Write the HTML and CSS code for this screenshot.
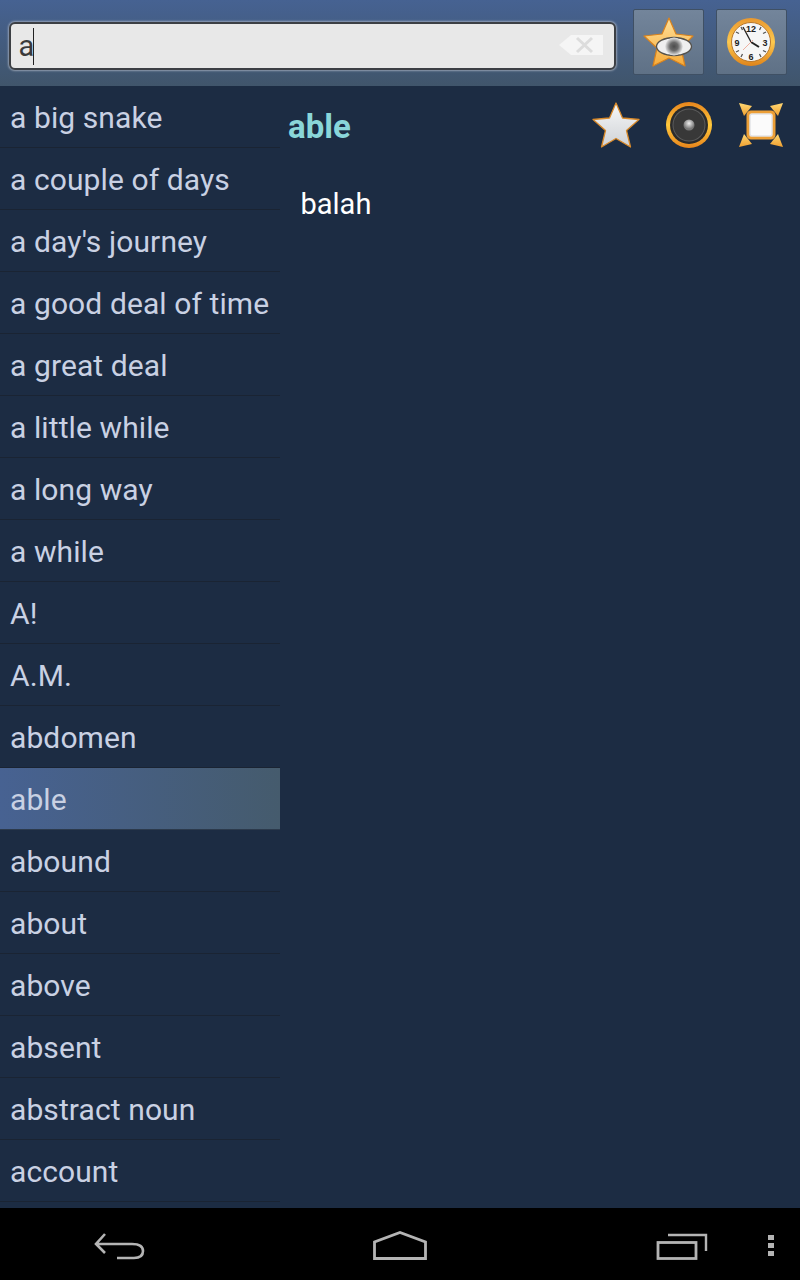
FILE: index.html
```html
<!DOCTYPE html>
<html lang="en">
<head>
<meta charset="utf-8">
<title>Dictionary</title>
<link rel="stylesheet" href="styles.css">
</head>
<body>
<div class="app">
  <header class="topbar">
    <div class="search">
      <span class="search-text">a</span><span class="caret"></span>
      <svg class="clear" width="44" height="20" viewBox="0 0 44 20">
        <path d="M0 10 L12 0 H44 V20 H12 Z" fill="#f5f5f5"/>
        <path d="M18 3 L33 17 M33 3 L18 17" stroke="#dcdcdc" stroke-width="3" fill="none"/>
      </svg>
    </div>
    <button class="tool">
      <svg width="69" height="64" viewBox="0 0 69 64">
        <defs>
          <linearGradient id="starGold" x1="0" y1="0" x2="0" y2="1">
            <stop offset="0" stop-color="#ffe09a"/>
            <stop offset="1" stop-color="#f6ab3a"/>
          </linearGradient>
          <radialGradient id="pupil">
            <stop offset="0" stop-color="#4c4c4c"/>
            <stop offset="0.45" stop-color="#6a6a6a"/>
            <stop offset="1" stop-color="#e8e8e8"/>
          </radialGradient>
        </defs>
        <path d="M35 8 L42 24 L59 26 L47 38 L51 56 L35 48 L19 56 L23 38 L10 26 L28 24 Z" fill="url(#starGold)" stroke="#d9821c" stroke-width="1.2" stroke-linejoin="round"/>
        <ellipse cx="40" cy="36.500" rx="17.500" ry="9" fill="#efefef" stroke="#55524c" stroke-width="1.3"/>
        <circle cx="40" cy="36.500" r="9" fill="url(#pupil)"/>
      </svg>
    </button>
    <button class="tool">
      <svg width="69" height="64" viewBox="0 0 69 64">
        <defs>
          <linearGradient id="clockRim" x1="0" y1="0" x2="0" y2="1">
            <stop offset="0" stop-color="#e9982f"/>
            <stop offset="0.5" stop-color="#fdc94f"/>
            <stop offset="1" stop-color="#e0841a"/>
          </linearGradient>
        </defs>
        <circle cx="34" cy="32" r="24" fill="url(#clockRim)"/>
        <circle cx="34" cy="32" r="19.500" fill="#f6f6f6" stroke="#b9772a" stroke-width="1"/>
        <path d="M44 17 L42.500 20 M49 22 L46 23.500 M49 42 L46 40.500 M44 47 L42.500 44 M24 47 L25.500 44 M19 42 L22 40.500 M19 22 L22 23.500 M24 17 L25.500 20" stroke="#555" stroke-width="1.3"/>
        <text class="clock-num" x="34" y="21.500">12</text>
        <text class="clock-num" x="48" y="35.500">3</text>
        <text class="clock-num" x="34" y="49.500">6</text>
        <text class="clock-num" x="20" y="35.500">9</text>
        <path d="M34 32 L26 17" stroke="#222" stroke-width="1.3"/>
        <path d="M34 32 L42 37" stroke="#222" stroke-width="2"/>
        <path d="M36 30 L26 40" stroke="#eeb0a0" stroke-width="1"/>
      </svg>
    </button>
  </header>
  <main class="content">
    <ul class="word-list">
      <li class="word">a big snake</li>
      <li class="word">a couple of days</li>
      <li class="word">a day's journey</li>
      <li class="word">a good deal of time</li>
      <li class="word">a great deal</li>
      <li class="word">a little while</li>
      <li class="word">a long way</li>
      <li class="word">a while</li>
      <li class="word">A!</li>
      <li class="word">A.M.</li>
      <li class="word">abdomen</li>
      <li class="word selected">able</li>
      <li class="word">abound</li>
      <li class="word">about</li>
      <li class="word">above</li>
      <li class="word">absent</li>
      <li class="word">abstract noun</li>
      <li class="word">account</li>
    </ul>
    <section class="detail">
      <div class="detail-head">
        <h1 class="headword">able</h1>
        <div class="actions">
          <svg width="48" height="46" viewBox="0 0 48 46">
            <defs>
              <linearGradient id="starSilver" x1="0" y1="0" x2="0" y2="1">
                <stop offset="0" stop-color="#f6f7f8"/>
                <stop offset="1" stop-color="#cfd2d6"/>
              </linearGradient>
            </defs>
            <path d="M24 1 L30.500 16 L47 17.500 L34.500 28.500 L38.500 45 L24 36.500 L9.500 45 L13.500 28.500 L1 17.500 L17.500 16 Z" fill="url(#starSilver)" stroke="#d98a2a" stroke-width="1.300" stroke-linejoin="round"/>
          </svg>
          <svg width="46" height="46" viewBox="0 0 46 46">
            <defs>
              <linearGradient id="speakerRim" x1="0" y1="0" x2="0" y2="1">
                <stop offset="0" stop-color="#e8851c"/>
                <stop offset="0.5" stop-color="#ffc93c"/>
                <stop offset="1" stop-color="#e8851c"/>
              </linearGradient>
              <radialGradient id="cap" cx="0.500" cy="0.350">
                <stop offset="0" stop-color="#f0f0f0"/>
                <stop offset="1" stop-color="#777"/>
              </radialGradient>
            </defs>
            <circle cx="23" cy="23" r="23" fill="url(#speakerRim)"/>
            <circle cx="23" cy="23" r="19" fill="#2b2b2b"/>
            <circle cx="23" cy="23" r="16.500" fill="#5c5c5c"/>
            <circle cx="23" cy="23" r="15.500" fill="#383838"/>
            <circle cx="23" cy="23" r="5.500" fill="url(#cap)"/>
          </svg>
          <svg width="46" height="46" viewBox="0 0 46 46">
            <defs>
              <linearGradient id="arrowGold" x1="0" y1="0" x2="0" y2="1">
                <stop offset="0" stop-color="#ffd873"/>
                <stop offset="1" stop-color="#f0a030"/>
              </linearGradient>
            </defs>
            <path d="M1 1 L14 4 L6 14 Z" fill="url(#arrowGold)"/>
            <path d="M45 1 L32 4 L40 14 Z" fill="url(#arrowGold)"/>
            <path d="M1 45 L6 32 L14 42 Z" fill="url(#arrowGold)"/>
            <path d="M45 45 L40 32 L32 42 Z" fill="url(#arrowGold)"/>
            <rect x="10" y="10" width="26" height="26" rx="3" fill="#fbfbfb" stroke="#ec9f37" stroke-width="3"/>
            <rect x="12" y="12" width="22" height="22" rx="2" fill="none" stroke="#d8dade" stroke-width="1"/>
          </svg>
        </div>
      </div>
      <p class="meaning">balah</p>
    </section>
  </main>
  <nav class="sysbar">
    <svg class="sys-back" width="52" height="28" viewBox="0 0 52 28">
      <path d="M11 1 L2 11 L11 20 M2 11 H38 C47 11 49 14 49 18 C49 23 46 25 40 25 H23" fill="none" stroke="#b4b4b4" stroke-width="2.600"/>
    </svg>
    <svg class="sys-home" width="54" height="29" viewBox="0 0 54 29">
      <path d="M1.500 27.500 V11 L27 1.500 L52.500 11 V27.500 Z" fill="none" stroke="#b4b4b4" stroke-width="2.800"/>
    </svg>
    <svg class="sys-recent" width="52" height="27" viewBox="0 0 52 27">
      <path d="M12 2 H50 V18" fill="none" stroke="#b4b4b4" stroke-width="2.400"/>
      <rect x="2" y="9.500" width="38" height="16" fill="none" stroke="#b4b4b4" stroke-width="2.800"/>
    </svg>
    <div class="sys-menu"><span></span><span></span><span></span></div>
  </nav>
</div>
</body>
</html>
```

FILE: styles.css
```css
* { box-sizing: border-box; }
html, body { margin: 0; padding: 0; }
body { background: #1c2c43; font-family: Roboto, "Liberation Sans", sans-serif; }
.app { width: 800px; height: 1280px; display: flex; flex-direction: column; overflow: hidden; }

.topbar {
  height: 86px; flex: none; display: flex; align-items: flex-start;
  padding: 9px 13px 0 9px; gap: 12px;
  background: linear-gradient(#466292, #40556b);
}
.search {
  width: 607px; height: 48px; margin: 13px 5px 0 0; padding-left: 7.500px; flex: none;
  display: flex; align-items: center; position: relative;
  background: #e8e8e8; border: 2px solid #3c3f44; border-radius: 6px;
  box-shadow: 0 0 2px 1px rgba(200, 205, 215, 0.6);
}
.search-text { font-size: 29px; font-weight: 400; color: #3a3a3a; line-height: 1; }
.caret { width: 1px; height: 37px; background: #222; margin-left: -1px; }
.clear { position: absolute; right: 11px; top: 11px; }
.tool {
  width: 71px; height: 66px; flex: none; padding: 0; border: 1px solid #3f5064; border-radius: 2px;
  background: linear-gradient(#73859b, #5f7186); display: block;
}
.tool svg { display: block; }
.clock-num { font: bold 9px "Liberation Sans", sans-serif; text-anchor: middle; fill: #222; }

.content { flex: 1; min-height: 0; display: flex; background: #1c2c43; }
.word-list { width: 280px; flex: none; margin: 0; padding: 0; list-style: none; overflow: hidden; }
.word {
  height: 62px; padding: 2px 0 0 10px; display: flex; align-items: center;
  font-size: 30px; letter-spacing: 0.1px; color: #c9d1e3; border-bottom: 1px solid #1a2433; white-space: nowrap;
}
.word.selected { background: linear-gradient(to right, #476292, #455b6d); border-bottom-color: #2c3a4c; }

.detail { flex: 1; min-width: 0; padding-left: 8px; }
.detail-head { display: flex; align-items: center; justify-content: space-between; height: 78px; padding-right: 16px; }
.headword { margin: 3px 0 0; font-size: 33px; font-weight: 700; color: #8ad6d9; }
.actions { display: flex; align-items: center; gap: 26px; }
.actions svg { display: block; }
.meaning { margin: 18px 0 0 12.500px; font-size: 29px; line-height: 44px; color: #fff; }

.sysbar { height: 72px; flex: none; background: #000; position: relative; display: flex; align-items: flex-start; padding-top: 23px; }
.sys-back { margin-left: 94px; margin-top: 2px; }
.sys-home { margin-left: 227px; }
.sys-recent { margin-left: 229px; margin-top: 2px; }
.sys-menu { margin-left: 60px; margin-top: 4px; display: flex; flex-direction: column; gap: 3px; }
.sys-menu span { display: block; width: 6px; height: 5px; background: #b4b4b4; }
```
